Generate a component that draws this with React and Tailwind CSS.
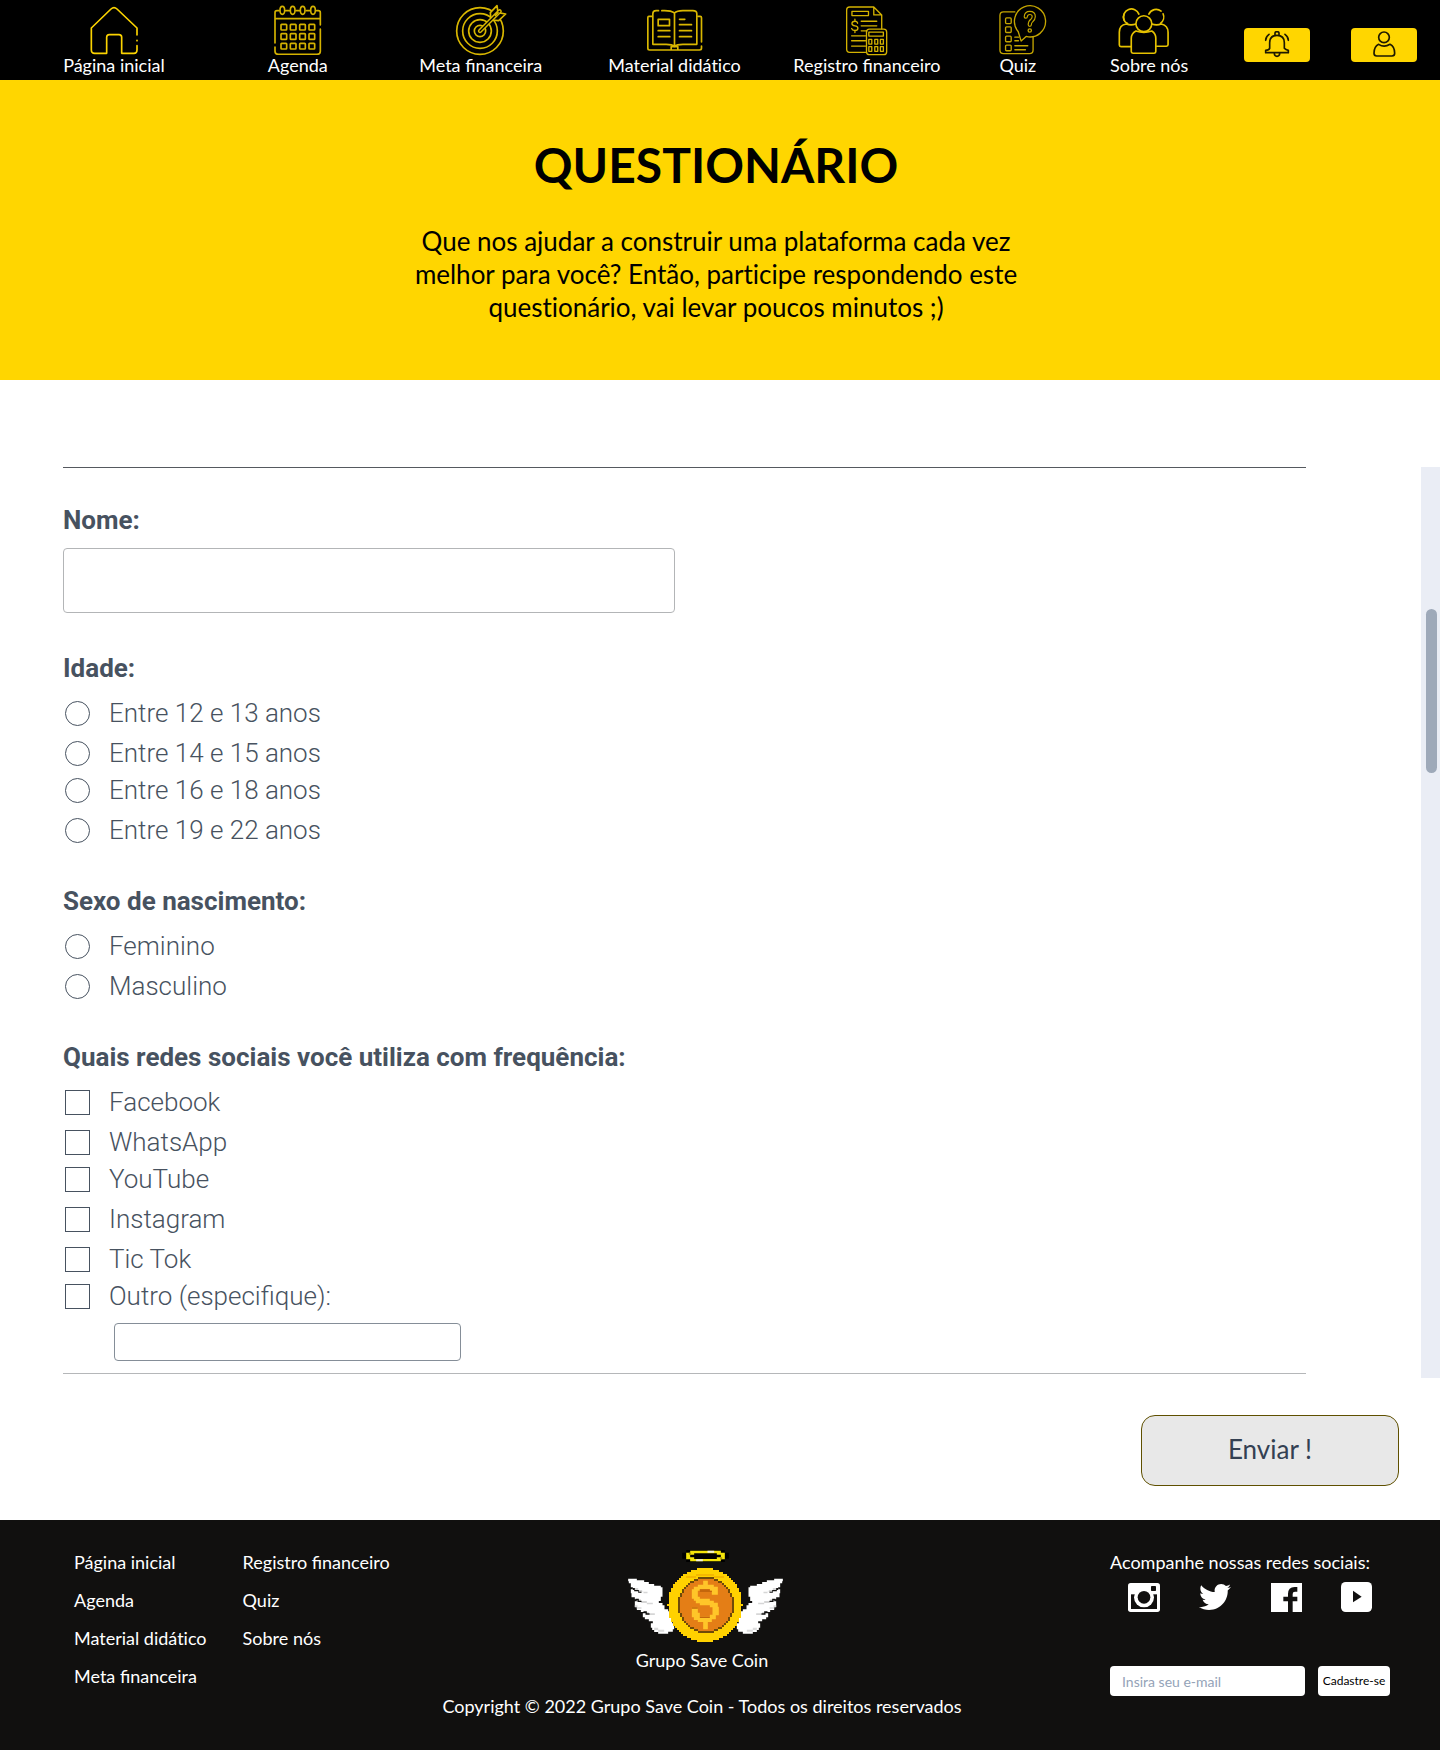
import React from "react";
import { FaTwitter } from "react-icons/fa";

const LATO = "font-[Lato,sans-serif]";

/* Keeps the "fi" ligature but leaves "ti" as two letters. */
const ligatures = (text) => (text.includes("fi") ? "" : "[font-variant-ligatures:none]");

function Line({ viewBox, className, width = 4, color = "#e6c200", children }) {
  return (
    <svg
      viewBox={viewBox}
      className={className}
      fill="none"
      stroke={color}
      strokeWidth={width}
      strokeLinecap="round"
      strokeLinejoin="round"
      aria-hidden="true"
    >
      {children}
    </svg>
  );
}

function HouseIcon() {
  return (
    <Line viewBox="148 15 150 150" className="h-[50px] w-[50px]" width={5} color="#fbd300">
      <path d="M292 105V84L232 27Q223 19 214 27L155 84V150Q155 160 165 160H201V112Q201 104 209 104H238Q246 104 246 112V160H283Q292 160 292 150V137M292 121v1" />
    </Line>
  );
}

function CalendarIcon() {
  const xs = [724, 752, 780, 808];
  const ys = [74, 102, 131];
  return (
    <Line viewBox="700 16 150 150" className="h-[50px] w-[50px]" width={5} color="#d4b200">
      <path d="M718 33H712Q706 33 706 39V130M706 142V155Q706 164 716 164H832Q842 164 842 155V88M842 76V39Q842 33 836 33H831M738 33H749M769 33H780M800 33H811M706 57H842" />
      {[728, 759, 789, 820].map((x) => (
        <ellipse key={x} cx={x} cy="32" rx="7" ry="12" />
      ))}
      {ys.map((y) => xs.map((x) => <rect key={x + "-" + y} x={x} y={y} width="17" height="17" rx="2" />))}
    </Line>
  );
}

function TargetIcon() {
  return (
    <Line viewBox="164 12 156 156" className="h-[52px] w-[52px]" width={5} color="#d9b700">
      {[70, 52, 34, 17].map((r) => (
        <circle key={r} cx="239" cy="93" r={r} />
      ))}
      <path d="M272 60L270 38L290 17L293 38L316 42L295 62Z" fill="#000" />
      <path d="M239 93L298 34" strokeWidth="13" />
      <path d="M239 93L298 34" stroke="#000" strokeWidth="4" />
      <path d="M293 38L285 46" />
    </Line>
  );
}

function BookIcon() {
  return (
    <Line viewBox="740 20 170 138" className="h-[46px] w-[57px]" width={5} color="#d9b700">
      <path d="M825 38Q815 31 795 31H787M777 31H770Q760 31 760 40V132H800Q818 132 825 138Q832 132 850 132H892V40Q892 31 880 31H850Q832 31 825 38V138" />
      <path d="M757 48H748Q745 48 745 52V144Q745 149 750 149H815V139H835V149H900Q906 149 906 144V137M906 125V52Q906 48 902 48H895M815 149H835" />
      <rect x="776" y="57" width="34" height="19" />
      <path d="M776 91H811M776 109H811M840 57H856M840 73H876M840 91H876M840 109H876" />
    </Line>
  );
}

function RegisterIcon() {
  return (
    <Line viewBox="196 12 130 154" className="h-[51px] w-[43px]" color="#d4b200">
      <path d="M283 18H210Q201 18 201 27V145Q201 155 210 155H258M283 18L307 42V84M283 18V42H307" />
      <rect x="217" y="31" width="50" height="13" />
      <path d="M234 67Q233 61 226 61Q217 61 217 68Q217 74 226 75Q235 76 235 82Q235 89 226 89Q218 89 216 83M226 55V61M226 89V95" />
      <path d="M245 61H292M245 75H292M245 90H262M216 105H258M216 120H258M216 136H258" />
      <rect x="261" y="85" width="61" height="77" rx="9" />
      <rect x="268" y="94" width="44" height="12" />
      {[116, 138].map((y) =>
        [268, 286, 303].map((x) => <rect key={x + "-" + y} x={x} y={y} width="9" height="14" />)
      )}
    </Line>
  );
}

function QuizIcon() {
  return (
    <Line viewBox="630 11 175 152" className="h-[51px] w-[58px]" color="#c4a500">
      <path d="M708 31H674Q663 31 663 42V146Q663 157 674 157H752Q763 157 763 146V107" />
      {[49, 76, 104, 131].map((y) => (
        <rect key={y} x="680" y={y} width="17" height="17" rx="3" />
      ))}
      <path d="M742 105A47 47 0 1 0 718 90L727 119Z" />
      <path d="M741 45Q742 34 753 34Q765 34 765 45Q765 52 759 57Q753 61 753 70" strokeWidth="13" />
      <path d="M741 45Q742 34 753 34Q765 34 765 45Q765 52 759 57Q753 61 753 70" stroke="#000" strokeWidth="6" />
      <circle cx="753" cy="87" r="5" />
      <path d="M708 107H719M708 118H719M708 133H747M708 145H740" />
    </Line>
  );
}

function PeopleIcon() {
  return (
    <Line viewBox="118 21 190 147" className="h-[49px] w-[63px]" width={5} color="#e6c200">
      <path d="M157 143H127Q122 143 122 138V100Q122 78 143 75Q157 80 172 75" />
      <path d="M235 142H264Q269 142 269 137V100Q269 80 249 75Q234 80 220 75" />
      <path d="M136 62A24 24 0 1 1 181 45M144 72L147 74" />
      <path d="M211 45A24 24 0 0 1 248 36M254 44A24 24 0 0 1 246 73M136 46A24 24 0 0 0 145 73" />
      <path d="M172 96Q158 104 158 118V158Q158 163 163 163H227Q232 163 232 158V118Q232 104 220 96Q196 104 172 96Z" fill="#000" />
      <circle cx="196" cy="74" r="24" fill="#000" />
    </Line>
  );
}

function BellIcon() {
  return (
    <Line viewBox="552 93 84 84" className="h-7 w-7" width={5} color="#1d1900">
      <path d="M572 145V128Q572 106 594 106Q616 106 616 128V145Q620 150 628 151V158H560V151Q570 150 572 145Z" />
      <path d="M588 104V99Q588 95 594 95Q600 95 600 99V104M586 160Q586 169 594 169Q602 169 602 160M570 103Q560 110 560 121M618 103Q628 110 628 121" />
    </Line>
  );
}

function UserIcon() {
  return (
    <Line viewBox="872 93 84 84" className="h-7 w-7" width={5} color="#1d1900">
      <circle cx="914" cy="112" r="16" />
      <path d="M898 133Q884 140 884 160Q884 168 892 168H938Q946 168 946 160Q946 140 932 133Q914 144 898 133Z" />
    </Line>
  );
}

/* Rows of a disc, quantised to square cells. */
function PixelDisc({ cx, cy, r, cell, fill }) {
  const rows = [];
  for (let y = -r; y < r; y += cell) {
    const mid = y + cell / 2;
    const half = Math.round(Math.sqrt(Math.max(0, r * r - mid * mid)) / cell) * cell;
    rows.push(<rect key={y} x={cx - half} y={cy + y} width={half * 2} height={cell} fill={fill} />);
  }
  return <g>{rows}</g>;
}

function Wing() {
  return (
    <g>
      <path
        d="M88 146H114V151H136V156H150V162H166V167H186V172H191V200H186V213H180V219H191V226H197V238H208V244H214V250H220V280H226V298H222V305H208V311H178V306H166V300H160V293H156V280H162V274H150V268H138V262H132V250H138V246H126V240H114V232H108V214H114V208H108V202H98V190H96V178H102V172H96V160H90V154H88Z"
        fill="#fff"
      />
      <path
        d="M106 174H118V180H130V185H146V190H134V186H118V181H106ZM114 208H126V213H144V218H162V223H144V219H126V214H114ZM138 246H150V250H168V255H150V252H138Z"
        fill="#d6d6d6"
      />
      <path d="M102 174H108V180H120V185H128V188H118V184H106V180H102ZM110 206H120V212H128V216H116V211H110ZM134 244H144V250H152V254H140V249H134Z" fill="#11100f" />
      <path d="M166 293H178V299H196V305H178V300H166ZM108 226H116V232H128V236H114V231H108Z" fill="#dcdcdc" />
    </g>
  );
}

function CoinLogo() {
  return (
    <svg viewBox="61 60 497 285" className="h-[95px] w-[166px]" role="img" aria-label="Grupo Save Coin">
      <path d="M250 68H262V60H378V68H390V86H378V96H262V86H250Z" fill="#000" />
      <path
        d="M274 62H366V68H378V88H366V94H274V88H262V68H274ZM286 70V74H274V82H286V87H354V82H366V74H354V70Z"
        fill="#f5e50a"
        fillRule="evenodd"
      />
      <path d="M326 62H346V68H326ZM292 88H312V94H292Z" fill="#f1efe0" />
      <path d="M270 68H276V74H270ZM364 82H370V88H364Z" fill="#a8980a" />
      <Wing />
      <g transform="translate(640 0) scale(-1 1)">
        <Wing />
      </g>
      <g shapeRendering="crispEdges">
        <PixelDisc cx={319} cy={226} r={111} cell={6} fill="#ffd100" />
        <path d="M262 138H292V132H346V138H376V143H346V138H292V143H262Z" fill="#f5b800" />
        <PixelDisc cx={320} cy={225} r={84} cell={6} fill="#6f4a08" />
        <PixelDisc cx={320} cy={225} r={78} cell={6} fill="#e47e16" />
      </g>
      <path
        d="M313 152H327V164H345V170H357V194H339V182H333V178H303V182H297V200H303V206H333V212H345V218H357V230H360V256H351V268H339V276H327V298H313V276H297V270H285V262H279V232H297V248H303V260H333V254H341V232H333V226H303V220H291V212H285V206H279V178H285V170H297V164H313Z"
        fill="#ffc629"
      />
      <path d="M303 178H333V182H339V186H303ZM279 232H297V236H279ZM303 260H333V264H303Z" fill="#c4660c" />
    </svg>
  );
}

function InstagramIcon() {
  return (
    <svg viewBox="114 129 96 87" className="h-[29px] w-8" aria-hidden="true">
      <rect x="114" y="129" width="96" height="87" rx="8" fill="#fff" />
      <rect x="123" y="163" width="78" height="44" fill="#11100f" />
      <circle cx="162" cy="172" r="30" fill="#fff" />
      <circle cx="162" cy="172" r="19" fill="#11100f" />
      <rect x="183" y="138" width="15" height="15" rx="2" fill="#11100f" />
    </svg>
  );
}

function FacebookIcon() {
  return (
    <svg viewBox="537 129 93 87" className="h-[29px] w-[31px]" aria-hidden="true">
      <rect x="537" y="129" width="93" height="87" fill="#fff" />
      <path d="M588 216V184H574V170H588V162Q588 141 608 141H616V155H609Q602 155 602 162V170H616V184H602V216Z" fill="#11100f" />
    </svg>
  );
}

function YoutubeIcon() {
  return (
    <svg viewBox="753 126 93 90" className="h-[30px] w-[31px]" aria-hidden="true">
      <rect x="753" y="126" width="93" height="90" rx="14" fill="#fff" />
      <path d="M789 152V187L815 170Z" fill="#11100f" />
    </svg>
  );
}

const navItems = [
  { label: "Página inicial", Icon: HouseIcon },
  { label: "Agenda", Icon: CalendarIcon },
  { label: "Meta financeira", Icon: TargetIcon },
  { label: "Material didático", Icon: BookIcon },
  { label: "Registro financeiro", Icon: RegisterIcon },
  { label: "Quiz", Icon: QuizIcon },
  { label: "Sobre nós", Icon: PeopleIcon },
];

function Header() {
  return (
    <header className="bg-black text-white">
      <nav className="grid h-20 grid-cols-[184fr_184fr_182fr_206fr_179fr_123fr_140fr_116fr_98fr] items-center pr-[7px] pl-[22px]">
        {navItems.map(({ label, Icon }) => (
          <a key={label} href="#" className={`flex flex-col items-center text-lg leading-5 whitespace-nowrap ${ligatures(label)}`}>
            <span className="flex h-[50px] items-center justify-center">
              <Icon />
            </span>
            {label}
          </a>
        ))}
        <button type="button" aria-label="Notificações" className="mt-[10px] flex h-[34px] w-[66px] items-center justify-center justify-self-center rounded bg-[#ffd600]">
          <BellIcon />
        </button>
        <button type="button" aria-label="Perfil" className="mt-[10px] flex h-[34px] w-[66px] items-center justify-center justify-self-center rounded bg-[#ffd600]">
          <UserIcon />
        </button>
      </nav>
    </header>
  );
}

function Choice({ type, name, label }) {
  return (
    <label className="mt-2 flex h-8 items-center gap-[19px] pl-[2px] text-[26px] leading-8 font-light first:mt-0 [&:nth-child(3n)]:mt-[5px]">
      <input
        type={type}
        name={name}
        className={
          type === "radio"
            ? "h-[25px] w-[25px] appearance-none rounded-full border border-[#475260] checked:bg-[#475260]"
            : "h-[25px] w-[25px] appearance-none border border-[#475260] checked:bg-[#475260]"
        }
      />
      {label}
    </label>
  );
}

function Question({ title, type, name, options }) {
  return (
    <fieldset className="mt-[39px]">
      <legend className="mb-[13px] text-[26px] leading-8 font-bold">{title}</legend>
      <div>
        {options.map((option) => (
          <Choice key={option} type={type} name={name} label={option} />
        ))}
      </div>
    </fieldset>
  );
}

function Survey() {
  return (
    <form className="pt-[87px] pb-[34px]" onSubmit={(event) => event.preventDefault()}>
      <div className="flex justify-between">
        <div className="flex-1 pr-[115px] pb-1 pl-[63px] font-[Roboto,sans-serif] text-[#475260]">
          <div className="border-t border-b border-t-[#55595f] border-b-[#b5b7b9] pt-9 pb-3">
            <label htmlFor="nome" className="block text-[26px] leading-8 font-bold">
              Nome:
            </label>
            <input
              id="nome"
              type="text"
              className="mt-3 block h-[65px] w-[612px] max-w-full rounded border border-[#b3b5b7] px-4 text-2xl outline-none"
            />
            <Question
              title="Idade:"
              type="radio"
              name="idade"
              options={["Entre 12 e 13 anos", "Entre 14 e 15 anos", "Entre 16 e 18 anos", "Entre 19 e 22 anos"]}
            />
            <Question title="Sexo de nascimento:" type="radio" name="sexo" options={["Feminino", "Masculino"]} />
            <Question
              title="Quais redes sociais você utiliza com frequência:"
              type="checkbox"
              name="redes"
              options={["Facebook", "WhatsApp", "YouTube", "Instagram", "Tic Tok", "Outro (especifique):"]}
            />
            <input
              type="text"
              aria-label="Outra rede social"
              className="mt-[11px] ml-[51px] block h-[38px] w-[347px] rounded border border-[#858e98] px-3 text-lg outline-none"
            />
          </div>
        </div>
        <div className="w-[19px] bg-[#eaedf5] pt-[142px] pl-[5px]" aria-hidden="true">
          <div className="h-[164px] w-[11px] rounded-full bg-[#9ea9b9]" />
        </div>
      </div>
      <div className="flex justify-end pt-[37px] pr-[41px]">
        <button type="submit" className={`h-[71px] w-[258px] rounded-[14px] border border-[#5f5000] bg-[#e8e8e8] pb-[2px] text-[26px] text-[#334052] ${LATO}`}>
          Enviar !
        </button>
      </div>
    </form>
  );
}

function LinkColumn({ links }) {
  return (
    <ul className="flex flex-col gap-[14px]">
      {links.map((text) => (
        <li key={text} className={ligatures(text)}>
          <a href="#">{text}</a>
        </li>
      ))}
    </ul>
  );
}

function Footer() {
  return (
    <footer className="grid grid-cols-[354fr_548fr_414fr] bg-[#11100f] pt-[30px] pr-[50px] pb-8 pl-[74px] text-lg leading-6 whitespace-nowrap text-white">
      <nav className="flex gap-9">
        <LinkColumn links={["Página inicial", "Agenda", "Material didático", "Meta financeira"]} />
        <LinkColumn links={["Registro financeiro", "Quiz", "Sobre nós"]} />
      </nav>
      <div className="flex flex-col items-center">
        <CoinLogo />
        <p className="mt-[3px]">Grupo Save Coin</p>
        <p className="mt-[22px]">Copyright © 2022 Grupo Save Coin - Todos os direitos reservados</p>
      </div>
      <div className="w-[280px] justify-self-end">
        <p>Acompanhe nossas redes sociais:</p>
        <div className="mt-[7px] flex w-[262px] items-center justify-between pl-[18px]">
          <a href="#" aria-label="Instagram">
            <InstagramIcon />
          </a>
          <a href="#" aria-label="Twitter">
            <FaTwitter className="h-8 w-8" />
          </a>
          <a href="#" aria-label="Facebook">
            <FacebookIcon />
          </a>
          <a href="#" aria-label="YouTube">
            <YoutubeIcon />
          </a>
        </div>
        <div className="mt-[53px] flex items-center justify-between">
          <input
            type="email"
            aria-label="E-mail"
            placeholder="Insira seu e-mail"
            className="h-[30px] w-[195px] rounded bg-white px-3 text-sm text-gray-800 outline-none placeholder:text-[#94a3b8]"
          />
          <button type="button" className="h-[30px] w-[72px] rounded bg-white text-xs text-black">
            Cadastre-se
          </button>
        </div>
      </div>
    </footer>
  );
}

export default function App() {
  return (
    <div className={`bg-white ${LATO}`}>
      <Header />
      <section className="flex h-[300px] flex-col items-center bg-[#ffd600] pt-14 pr-2 text-center text-black">
        <h1 className="text-5xl leading-[58px] font-bold">QUESTIONÁRIO</h1>
        <p className="mt-[31px] w-[620px] max-w-full text-[26px] leading-[33px] [font-variant-ligatures:none]">
          Que nos ajudar a construir uma plataforma cada vez melhor para você? Então, participe respondendo este
          questionário, vai levar poucos minutos ;)
        </p>
      </section>
      <Survey />
      <Footer />
    </div>
  );
}
